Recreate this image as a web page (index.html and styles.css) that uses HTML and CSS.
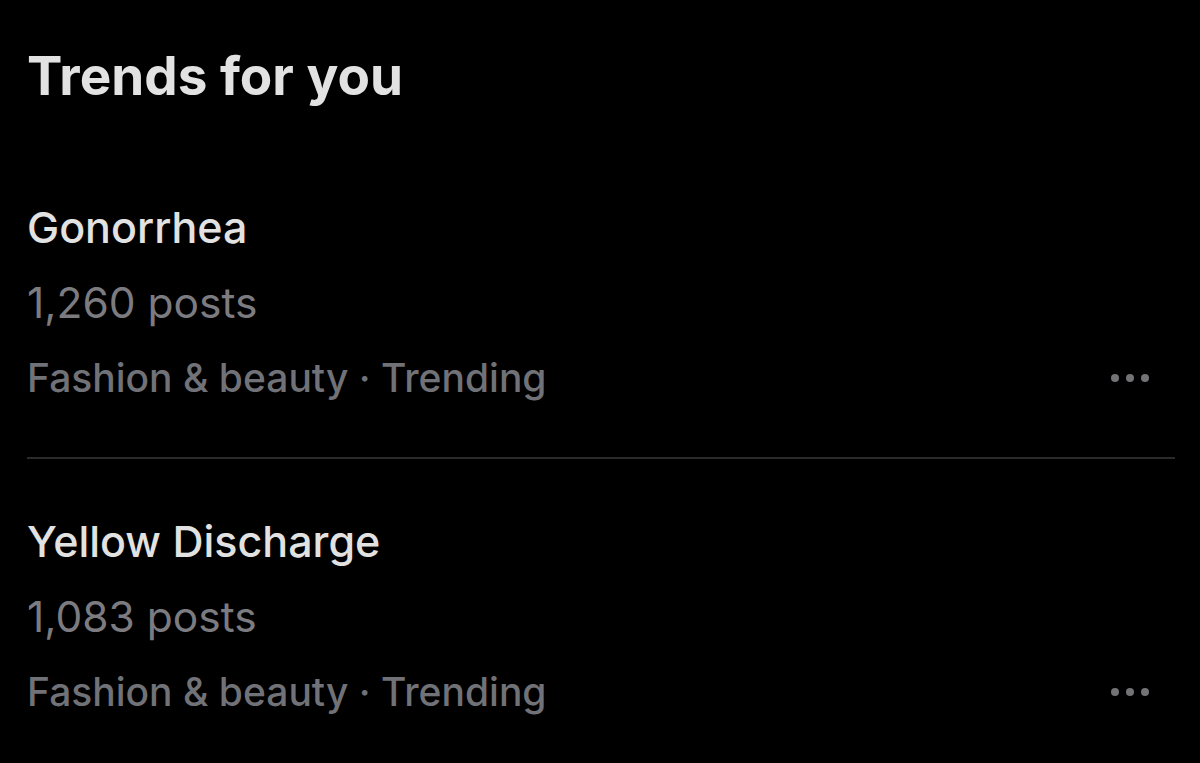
FILE: index.html
```
<!DOCTYPE html>
<html lang="en">
<head>
    <meta charset="UTF-8">
    <meta name="viewport" content="width=device-width, initial-scale=1.0">
    <title>Trends for you</title>
    <link rel="stylesheet" href="styles.css">
</head>
<body>
    <div class="panel">
        <h1 class="title">Trends for you</h1>

        <div class="trend">
            <div class="trend-body">
                <div class="trend-name">Gonorrhea</div>
                <div class="trend-count">1,260 posts</div>
                <div class="trend-meta">Fashion &amp; beauty · Trending</div>
            </div>
            <div class="more"><span></span><span></span><span></span></div>
        </div>

        <div class="trend">
            <div class="trend-body">
                <div class="trend-name">Yellow Discharge</div>
                <div class="trend-count">1,083 posts</div>
                <div class="trend-meta">Fashion &amp; beauty · Trending</div>
            </div>
            <div class="more"><span></span><span></span><span></span></div>
        </div>
    </div>
</body>
</html>
```

FILE: styles.css
```
html, body {
    margin: 0;
    background: #000;
    height: 100%;
}

body {
    font-family: Inter, "Noto Sans", sans-serif;
    overflow: hidden;
}

.panel {
    padding: 0 25px 0 27px;
}

.title {
    margin: 0;
    padding-top: 44px;
    font-size: 53px;
    font-weight: 700;
    line-height: 64px;
    color: #e2e2e2;
}

.trend {
    display: flex;
    align-items: flex-end;
    justify-content: space-between;
    padding: 82px 0 42px;
}

.trend + .trend {
    border-top: 2px solid #2a2a2c;
    padding-top: 45px;
}

.trend-name {
    font-size: 43px;
    font-weight: 500;
    line-height: 75px;
    color: #e2e2e2;
}

.trend-count {
    font-size: 42.5px;
    font-weight: 400;
    line-height: 75px;
    color: #7b7b80;
}

.trend-meta {
    font-size: 39px;
    font-weight: 500;
    line-height: 75px;
    color: #707277;
}

.more {
    display: flex;
    gap: 7px;
    margin-right: 26px;
    margin-bottom: 33px;
}

.more span {
    width: 8px;
    height: 8px;
    border-radius: 50%;
    background: #737376;
}
```
